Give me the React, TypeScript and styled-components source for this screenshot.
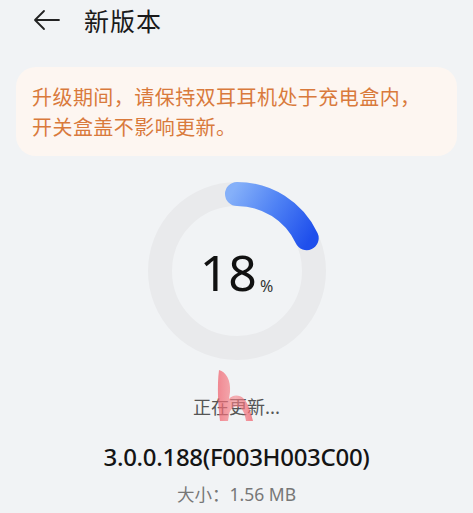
import React from 'react';
import styled, { createGlobalStyle } from 'styled-components';

const GlobalStyle = createGlobalStyle`
  html, body {
    margin: 0;
    padding: 0;
    background: #f1f3f5;
  }
  body {
    font-family: "Noto Sans", "Noto Sans CJK SC", sans-serif;
  }
`;

const Page = styled.div`
  width: 473px;
  height: 513px;
  overflow: hidden;
  background: #f1f3f5;
  display: flex;
  flex-direction: column;
`;

const Header = styled.div`
  height: 40px;
  display: flex;
  align-items: center;
  padding-left: 33px;
  gap: 23px;
`;

const Title = styled.div`
  font-family: "Noto Sans CJK SC", sans-serif;
  font-size: 25px;
  font-weight: 400;
  color: #1a1a1a;
  letter-spacing: 1px;
`;

const Notice = styled.div`
  margin: 27px 16px 0 16px;
  padding: 15px 16px 14px 16px;
  background: #fdf6f1;
  border-radius: 20px;
  font-family: "Noto Sans CJK SC", sans-serif;
  font-size: 20px;
  letter-spacing: 0.45px;
  line-height: 30px;
  color: #d97a3c;
`;

const RingWrap = styled.div`
  position: relative;
  align-self: center;
  margin-top: 25px;
  width: 180px;
  height: 180px;
`;

const Center = styled.div`
  position: absolute;
  inset: 0;
  display: flex;
  align-items: center;
  justify-content: center;
  padding-top: 2px;
`;

const Number = styled.span`
  font-family: "Noto Sans", sans-serif;
  font-size: 50px;
  font-weight: 400;
  color: #111;
  line-height: 1;
`;

const Percent = styled.span`
  font-family: "Noto Sans", sans-serif;
  font-size: 16px;
  color: #333;
  align-self: flex-end;
  margin-bottom: 64px;
  margin-left: 3px;
`;

const Status = styled.div`
  position: relative;
  margin-top: 32px;
  text-align: center;
  font-family: "Noto Sans CJK SC", sans-serif;
  font-size: 18px;
  color: #555;
  height: 26px;
  line-height: 26px;
`;

const Mark = styled.svg`
  position: absolute;
  left: 214px;
  top: -25px;
`;

const Version = styled.div`
  margin-top: 22px;
  text-align: center;
  font-family: "Noto Sans", sans-serif;
  font-size: 24px;
  font-weight: 500;
  color: #141414;
  letter-spacing: -0.3px;
  line-height: 32px;
`;

const Size = styled.div`
  margin-top: 8px;
  text-align: center;
  font-family: "Noto Sans", "Noto Sans CJK SC", sans-serif;
  font-size: 17.5px;
  color: #777;
`;

const progress = 18;

const Ring: React.FC<{ value: number }> = ({ value }) => {
  const r = 77;
  const a = (value / 100) * 2 * Math.PI;
  const ex = 90 + r * Math.sin(a);
  const ey = 90 - r * Math.cos(a);
  return (
    <svg width="180" height="180" viewBox="0 0 180 180">
      <defs>
        <linearGradient id="arc" x1="84" y1="13" x2="162" y2="60" gradientUnits="userSpaceOnUse">
          <stop offset="0" stopColor="#85b0f9" />
          <stop offset="0.5" stopColor="#4d80f4" />
          <stop offset="1" stopColor="#1f4fec" />
        </linearGradient>
      </defs>
      <circle cx="90" cy="90" r={r} fill="none" stroke="#e9eaec" strokeWidth="24" />
      <path
        d={`M90 ${90 - r} A${r} ${r} 0 0 1 ${ex.toFixed(2)} ${ey.toFixed(2)}`}
        fill="none"
        stroke="url(#arc)"
        strokeWidth="24"
        strokeLinecap="round"
      />
    </svg>
  );
};

const App: React.FC = () => {
  return (
    <Page>
      <GlobalStyle />
      <Header>
        <svg width="28" height="22" viewBox="0 0 28 22">
          <path d="M26 11H3M11 2L2 11l9 9" fill="none" stroke="#222" strokeWidth="1.8" strokeLinecap="round" strokeLinejoin="round" />
        </svg>
        <Title>新版本</Title>
      </Header>
      <Notice>
        升级期间，请保持双耳耳机处于充电盒内，
        <br />
        开关盒盖不影响更新。
      </Notice>
      <RingWrap>
        <Ring value={progress} />
        <Center>
          <Number>{progress}</Number>
          <Percent>%</Percent>
        </Center>
      </RingWrap>
      <Status>
        正在更新...
        <Mark width="44" height="56" viewBox="0 0 44 56">
          <defs>
            <linearGradient id="mark" x1="0" y1="0" x2="1" y2="0">
              <stop offset="0" stopColor="rgba(240,100,112,0.75)" />
              <stop offset="0.5" stopColor="rgba(246,130,136,0.6)" />
              <stop offset="1" stopColor="rgba(240,96,108,0.75)" />
            </linearGradient>
          </defs>
          <path
            d="M5 2 C12 4 17 12 16 24 L15 31 C18 27 25 26 30 31 C35 37 37 45 39 53 L32 53 C31 46 29 41 25 39 C20 37 16 41 15 47 L14 53 L6 53 C4 36 3 18 5 2 Z"
            fill="url(#mark)"
          />
        </Mark>
      </Status>
      <Version>3.0.0.188(F003H003C00)</Version>
      <Size>大小：1.56 MB</Size>
    </Page>
  );
};

export default App;
